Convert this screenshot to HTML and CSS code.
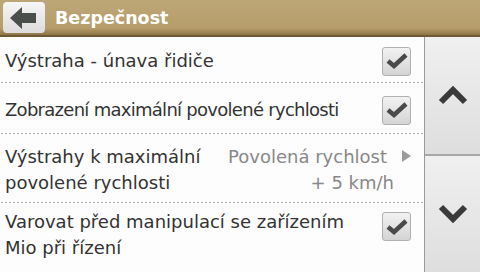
FILE: index.html
```html
<!DOCTYPE html>
<html lang="cs">
<head>
    <meta charset="UTF-8">
    <title>Bezpečnost</title>
    <link rel="stylesheet" href="styles.css">
</head>
<body>
    <div class="header">
        <button class="back">
            <svg width="28" height="22" viewBox="0 0 28 22"><path d="M0 11 L12 0 L12 6 L26 6 L26 16 L12 16 L12 22 Z" fill="#4a4f4c"/></svg>
        </button>
        <h1>Bezpečnost</h1>
    </div>
    <div class="main">
        <div class="list">
            <div class="row r1">
                <span class="label">Výstraha - únava řidiče</span>
                <span class="check"><svg width="22" height="16" viewBox="0 0 22 16"><path d="M2 8 L8 13 L20 2" fill="none" stroke="#4a4a4a" stroke-width="4.5"/></svg></span>
            </div>
            <div class="row r2">
                <span class="label squeeze">Zobrazení maximální povolené rychlosti</span>
                <span class="check"><svg width="22" height="16" viewBox="0 0 22 16"><path d="M2 8 L8 13 L20 2" fill="none" stroke="#4a4a4a" stroke-width="4.5"/></svg></span>
            </div>
            <div class="row r3">
                <span class="label">Výstrahy k maximální<br>povolené rychlosti</span>
                <span class="value">Povolená rychlost<br><span class="sub">+ 5 km/h</span></span>
                <span class="arrow"></span>
            </div>
            <div class="row r4">
                <span class="label">Varovat před manipulací se zařízením<br>Mio při řízení</span>
                <span class="check"><svg width="22" height="16" viewBox="0 0 22 16"><path d="M2 8 L8 13 L20 2" fill="none" stroke="#4a4a4a" stroke-width="4.5"/></svg></span>
            </div>
        </div>
        <div class="scroll">
            <button class="scroll-btn">
                <svg width="30" height="20" viewBox="0 0 30 20"><path d="M3 17 L15 5 L27 17" fill="none" stroke="#3a3a3a" stroke-width="6"/></svg>
            </button>
            <button class="scroll-btn">
                <svg width="30" height="20" viewBox="0 0 30 20"><path d="M3 3 L15 15 L27 3" fill="none" stroke="#3a3a3a" stroke-width="6"/></svg>
            </button>
        </div>
    </div>
</body>
</html>
```

FILE: styles.css
```css
* {
    margin: 0;
    padding: 0;
    box-sizing: border-box;
}

body {
    width: 480px;
    height: 272px;
    overflow: hidden;
    font-family: "DejaVu Sans", Verdana, sans-serif;
    background: #fdfdfd;
    display: flex;
    flex-direction: column;
}

.header {
    height: 37px;
    display: flex;
    align-items: center;
    padding-left: 3px;
    background: linear-gradient(#bda677, #b69d6b 80%, #8f7546);
    border-bottom: 2px solid #6f5a35;
}

.back {
    width: 42px;
    height: 31px;
    border: none;
    border-radius: 4px;
    background: linear-gradient(#f6f6f6, #dcdcdc);
    display: flex;
    align-items: center;
    justify-content: center;
}

.header h1 {
    margin-left: 10px;
    font-size: 17.5px;
    font-weight: bold;
    color: #fff;
}

.main {
    flex: 1;
    display: flex;
}

.list {
    width: 425px;
    border-right: 1px solid #9a9a9a;
    display: flex;
    flex-direction: column;
}

.row {
    display: flex;
    align-items: center;
    padding: 0 13px 0 5px;
    background: radial-gradient(circle, #b0b0b0 0.7px, transparent 0.8px) 0 100% / 4px 1px repeat-x;
}

.r1 {
    height: 46px;
    padding-top: 2px;
}

.r2 {
    height: 51px;
    padding-top: 3px;
}

.r3 {
    height: 69px;
    padding-top: 2px;
}

.r4 {
    flex: 1;
    background: none;
    align-items: flex-start;
    padding-top: 6px;
}

.label {
    flex: 1;
    font-size: 18px;
    line-height: 26px;
    color: #333;
    white-space: nowrap;
}

.label.squeeze {
    letter-spacing: -0.72px;
}

.value {
    font-size: 18px;
    line-height: 26px;
    color: #888;
    text-align: right;
    margin-right: 15px;
    white-space: nowrap;
}

.value .sub {
    margin-right: -7px;
}

.arrow {
    width: 0;
    height: 0;
    border-top: 6px solid transparent;
    border-bottom: 6px solid transparent;
    border-left: 9px solid #9a9a9a;
    align-self: flex-start;
    margin-top: 14px;
}

.check {
    flex: none;
    width: 29px;
    height: 29px;
    border: 1px solid #b0b0b0;
    border-radius: 3px;
    background: linear-gradient(#f2f2f2, #d4d4d4);
    display: flex;
    align-items: center;
    justify-content: center;
}

.r4 .check {
    margin-top: 3px;
}

.scroll {
    flex: 1;
    display: flex;
    flex-direction: column;
}

.scroll-btn {
    flex: 1;
    border: none;
    background: linear-gradient(#f0f0f0, #dedede);
    display: flex;
    align-items: center;
    justify-content: center;
}

.scroll-btn + .scroll-btn {
    border-top: 2px solid #a8a8a8;
}
```
